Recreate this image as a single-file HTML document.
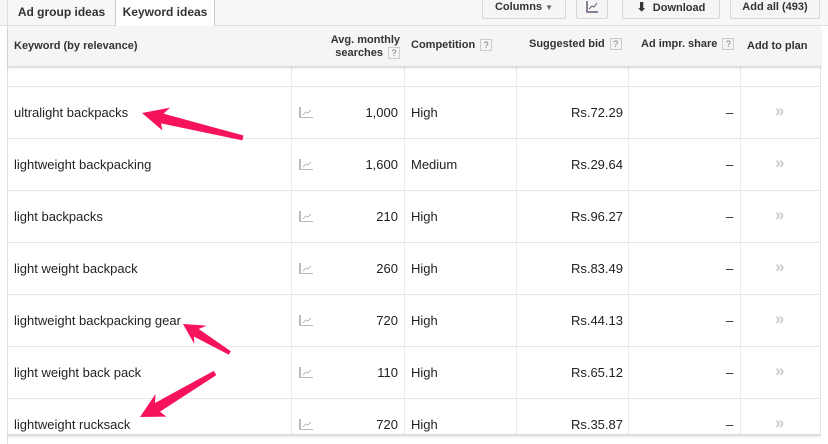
<!DOCTYPE html>
<html><head><meta charset="utf-8"><style>
*{margin:0;padding:0;box-sizing:border-box}
body{width:828px;height:444px;overflow:hidden;background:#fff;font-family:"Liberation Sans",Arial,sans-serif;position:relative;color:#222}
.a{position:absolute}
.topbar{left:0;top:0;width:828px;height:26px;background:#f7f7f7;border-bottom:1px solid #ddd}
.tab{top:0;height:26px;font-size:12px;font-weight:bold;color:#333;line-height:24px;text-align:center}
.btn{top:-2px;height:21px;border:1px solid #d8d8d8;border-radius:2px;background:#f5f5f5;font-size:11px;font-weight:bold;color:#333;text-align:center;line-height:17px}
.hdr{left:8px;top:26px;width:813px;height:40px;background:#f5f5f5;box-shadow:0 2px 2px rgba(0,0,0,.15);z-index:2}
.h{font-size:11px;font-weight:bold;color:#333;top:0;line-height:13px}
.q{display:inline-block;width:12px;height:12px;border:1px solid #ccc;font-size:9px;font-weight:normal;color:#777;line-height:10px;text-align:center;vertical-align:middle;margin-left:5px}
.vl{width:1px;background:#ebebeb;top:66px;height:370px}
.hl{left:8px;width:813px;height:1px;background:#e5e5e5}
.t{font-size:13px;color:#222}
.r{text-align:right}
.chart{width:14px;height:11px}
.ch{font-size:17px;color:#ccc;font-weight:bold}
</style></head><body>
<div class="a topbar"></div>
<div class="a tab" style="left:7px;width:108px;border-left:1px solid #ddd">Ad group ideas</div>
<div class="a tab" style="left:115px;width:100px;background:#fff;border-left:1px solid #ccc;border-right:1px solid #ccc;height:27px">Keyword ideas</div>
<div class="a btn" style="left:482px;width:84px">Columns <span style="font-size:8px;color:#666">▼</span></div>
<div class="a btn" style="left:576px;width:32px"><svg width="12" height="12" style="margin-top:2px"><path d="M1 0V11H12" stroke="#6a5a7a" stroke-width="1.5" fill="none"/><path d="M3 8L6 5 8 6 11 2" stroke="#6a5a7a" fill="none"/></svg></div>
<div class="a btn" style="left:622px;width:98px"><span style="font-size:12px">⬇</span>&nbsp; Download</div>
<div class="a btn" style="left:730px;width:90px">Add all (493)</div>
<div class="a" style="left:7px;top:26px;width:1px;height:418px;background:#ddd"></div>
<div class="a hdr">
<div class="a h" style="left:6px;top:14px">Keyword (by relevance)</div>
<div class="a h r" style="left:300px;top:8px;width:92px">Avg. monthly<br>searches<span class="q">?</span></div>
<div class="a h" style="left:403px;top:13px">Competition<span class="q">?</span></div>
<div class="a h" style="left:521px;top:12px">Suggested bid<span class="q">?</span></div>
<div class="a h" style="left:633px;top:12px">Ad impr. share<span class="q">?</span></div>
<div class="a h" style="left:739px;top:14px">Add to plan</div>
</div>
<div class="a vl" style="left:291px"></div>
<div class="a vl" style="left:404px"></div>
<div class="a vl" style="left:516px"></div>
<div class="a vl" style="left:628px"></div>
<div class="a vl" style="left:740px"></div>
<div class="a vl" style="left:820px;background:#e5e5e5"></div>
<div class="a hl" style="top:86px"></div>
<div class="a hl" style="top:138px"></div>
<div class="a hl" style="top:190px"></div>
<div class="a hl" style="top:242px"></div>
<div class="a hl" style="top:294px"></div>
<div class="a hl" style="top:346px"></div>
<div class="a hl" style="top:398px"></div>
<div class="a" style="left:8px;top:434px;width:813px;height:2px;background:#ddd;box-shadow:0 1px 2px rgba(0,0,0,.1)"></div>
<div id="rows"></div>
<script>
var d=[["ultralight backpacks","1,000","High","Rs.72.29"],["lightweight backpacking","1,600","Medium","Rs.29.64"],["light backpacks","210","High","Rs.96.27"],["light weight backpack","260","High","Rs.83.49"],["lightweight backpacking gear","720","High","Rs.44.13"],["light weight back pack","110","High","Rs.65.12"],["lightweight rucksack","720","High","Rs.35.87"]];
var h="";
d.forEach(function(r,i){var y=105+52*i;
h+='<div class="a t" style="left:14px;top:'+y+'px">'+r[0]+'</div>';
h+='<svg class="a chart" style="left:299px;top:'+(y+2)+'px" width="14" height="12"><path d="M1 0V11H14" stroke="#bbb" stroke-width="2" fill="none"/><path d="M4 8L7 5 9 6 12 3" stroke="#bbb" fill="none"/></svg>';
h+='<div class="a t r" style="left:310px;top:'+y+'px;width:88px">'+r[1]+'</div>';
h+='<div class="a t" style="left:411px;top:'+y+'px">'+r[2]+'</div>';
h+='<div class="a t r" style="left:520px;top:'+y+'px;width:103px">'+r[3]+'</div>';
h+='<div class="a t" style="left:726px;top:'+y+'px">–</div>';
h+='<div class="a ch" style="left:775px;top:'+(y-4)+'px">»</div>';});
document.getElementById("rows").innerHTML=h;
</script>
<svg class="a" style="left:0;top:0;z-index:5" width="828" height="444">
<g fill="#f7135c">
<polygon transform="translate(142,113) rotate(13.9)" points="0,0 26,-12 21,-4.5 104,-2.5 104,2.5 21,5.5 24,12"/>
<polygon transform="translate(183,324) rotate(31.7)" points="0,0 21,-11 16,-4 55,-2 55,2 16,5 20,11"/>
<polygon transform="translate(140,417) rotate(-30.4)" points="0,0 25,-12 20,-4.5 87,-2.5 87,2.5 20,5.5 23,13"/>
</g></svg>
</body></html>
